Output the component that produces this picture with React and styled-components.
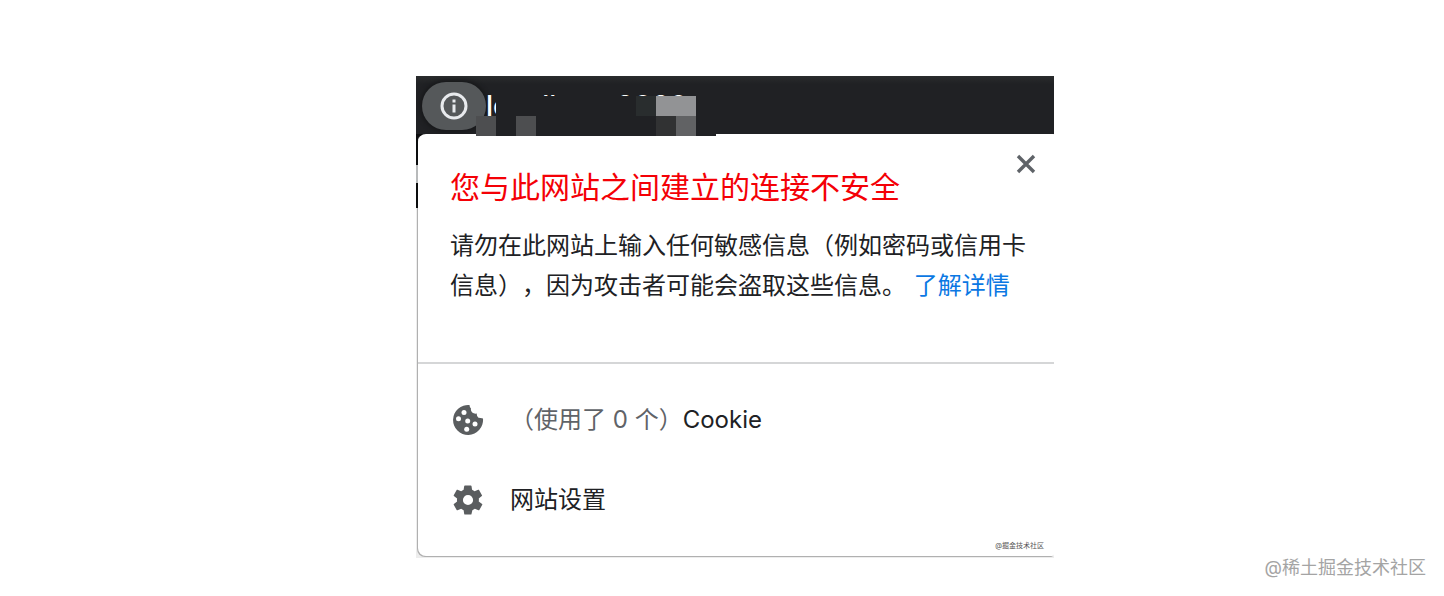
import React from "react";
import styled, { createGlobalStyle } from "styled-components";

const GlobalStyle = createGlobalStyle`
  * { box-sizing: border-box; }
  body {
    margin: 0;
    background: #fff;
    color: #202124;
    font-family: Inter, "Noto Sans CJK SC", sans-serif;
    text-spacing-trim: space-all;
  }
`;

const Page = styled.main`
  display: flex;
  flex-direction: column;
  align-items: center;
  min-height: 100vh;
  padding: 76px 0 16px 26px;
`;

const Capture = styled.section`
  width: 100%;
  max-width: 638px;
  overflow: hidden;
  background: #fff;
`;

const AddressBar = styled.header`
  position: relative;
  display: flex;
  align-items: center;
  height: 58px;
  padding: 2px 0 0 6px;
  background: linear-gradient(#2a2c2d, #202124 8px, #202124);
`;

const InfoButton = styled.button`
  display: flex;
  align-items: center;
  justify-content: center;
  width: 64px;
  height: 48px;
  padding: 0;
  border: 0;
  border-radius: 24px;
  background: #55585a;
  color: #e8eaed;
  box-shadow: 0 0 4px 2px #17181a;
`;

const Host = styled.span`
  color: #fff;
  font-size: 28px;
  font-weight: 500;
  line-height: 40px;
`;

const Mosaic = styled.svg`
  position: absolute;
  left: 60px;
  top: 20px;
  z-index: 2;
`;

const Frame = styled.div`
  position: relative;
  padding: 0 0 2px 2px;
  background: #ededed;
`;

const EdgeStrip = styled.span`
  position: absolute;
  left: 0;
  top: 0;
  z-index: 1;
  width: 2px;
  height: 74px;
  background: linear-gradient(#0c0d0e 31px, #b8babb 31px, #b8babb 49px, #0c0d0e 49px);
`;

const Corner = styled.span`
  position: absolute;
  left: 0;
  top: 0;
  width: 10px;
  height: 10px;
  background: #0c0d0e;
`;

const Popup = styled.article`
  position: relative;
  border-radius: 8px 2px 2px 8px;
  background: #fff;
  box-shadow: -1px 1px 0 #b0b0b0;
`;

const Message = styled.div`
  padding: 32px 28px 56px 32px;
  border-bottom: 2px solid #d5d6d7;
`;

const Title = styled.h1`
  margin: 0 0 18px;
  color: #f40006;
  font-size: 30px;
  font-weight: 400;
  line-height: 42px;
`;

const Description = styled.p`
  margin: 0;
  font-size: 24px;
  line-height: 40px;
`;

const Link = styled.a`
  margin-left: 1px;
  color: #0b78e3;
  text-decoration: none;
`;

const CloseButton = styled.button`
  position: absolute;
  top: 20px;
  right: 18px;
  display: flex;
  padding: 0;
  border: 0;
  background: none;
  color: #5f6368;
`;

const Options = styled.div`
  padding: 16px 0;
`;

const Option = styled.button`
  display: flex;
  align-items: center;
  gap: 26px;
  width: 100%;
  height: 80px;
  padding: 0 34px;
  border: 0;
  background: none;
  color: #202124;
  font: inherit;
  font-size: 24px;
  line-height: 40px;
  text-align: left;

  svg { flex: none; color: #5a5d5f; }
`;

const Count = styled.span`
  color: #5f6368;
`;

const SmallMark = styled.small`
  position: absolute;
  right: 10px;
  bottom: 6px;
  color: #555;
  font-size: 7px;
  line-height: 8px;
`;

const Watermark = styled.footer`
  align-self: flex-end;
  padding-right: 18px;
  color: #a4a4a4;
  font-size: 18px;
  line-height: 20px;
`;

const InfoIcon = () => (
  <svg width="28" height="28" viewBox="0 0 28 28" fill="currentColor">
    <circle cx="14" cy="14" r="12" fill="none" stroke="currentColor" strokeWidth="3" />
    <path d="M12.5 7.5h3v3h-3zM12.5 12.5h3v8h-3z" />
  </svg>
);

const CloseIcon = () => (
  <svg width="20" height="20" viewBox="0 0 20 20">
    <path d="M2 2 18 18M18 2 2 18" stroke="currentColor" strokeWidth="3.4" />
  </svg>
);

const CookieIcon = () => (
  <svg width="32" height="32" viewBox="0 0 32 32">
    <path fill="currentColor" d="M17.500 1A15 15 0 1 0 31 14.500Q28.500 14 26.500 13.800Q24.500 12.500 24.800 9.500Q22 10 20.200 8.500Q18.500 7 19 4.500Q17.500 3 17.500 1Z" />
    <g fill="#fff">
      <circle cx="12" cy="8.500" r="2.500" />
      <circle cx="6.500" cy="14.700" r="2.500" />
      <circle cx="15.700" cy="17" r="2.500" />
      <circle cx="23" cy="20" r="2.500" />
      <circle cx="14.700" cy="25.200" r="2.500" />
    </g>
  </svg>
);

const GearIcon = () => (
  <svg width="32" height="32" viewBox="1 1 22 22" fill="currentColor">
    <path fillRule="evenodd" d="M19.400 13c0-.3.100-.6.100-1s0-.7-.1-1l2.100-1.700c.2-.2.300-.4.100-.6l-2-3.500c-.1-.2-.4-.3-.6-.2l-2.500 1c-.5-.4-1.100-.7-1.700-1l-.4-2.600c0-.2-.2-.4-.5-.4h-4c-.2 0-.5.2-.5.400L9 5c-.6.300-1.100.6-1.700 1l-2.500-1c-.2-.1-.5 0-.6.200l-2 3.500c-.1.200-.1.500.100.600L4.500 11c0 .3-.1.600-.1 1s0 .7.100 1l-2.200 1.700c-.2.200-.2.400-.1.600l2 3.500c.1.200.4.300.6.200l2.500-1c.5.400 1.100.7 1.700 1l.4 2.600c0 .2.300.4.500.4h4c.3 0 .5-.2.500-.4L15 19c.6-.3 1.100-.6 1.700-1l2.500 1c.2.100.5 0 .6-.2l2-3.500c.1-.2.100-.5-.1-.6zM12 15.500A3.500 3.500 0 1 1 12 8.500a3.500 3.500 0 0 1 0 7z" />
  </svg>
);

const MosaicCover = () => (
  <Mosaic width="240" height="40" shapeRendering="crispEdges" aria-hidden="true">
    <path fill="#202124" d="M20 0H240V40H0V20H20Z" />
    <path fill="#4d4e50" d="M0 20H20V40H0ZM40 20H60V40H40Z" />
    <path fill="#292d2e" d="M160 0H180V20H160Z" />
    <path fill="#929395" d="M180 0H220V20H180Z" />
    <path fill="#313233" d="M180 20H200V40H180Z" />
    <path fill="#616264" d="M200 20H220V40H200Z" />
  </Mosaic>
);

export default function App() {
  return (
    <>
      <GlobalStyle />
      <Page>
        <Capture>
          <AddressBar>
            <InfoButton aria-label="网站信息"><InfoIcon /></InfoButton>
            <Host>localhost:8080</Host>
            <MosaicCover />
          </AddressBar>
          <Frame>
            <Corner />
            <Popup>
              <CloseButton aria-label="关闭"><CloseIcon /></CloseButton>
              <Message>
                <Title>您与此网站之间建立的连接不安全</Title>
                <Description>
                  请勿在此网站上输入任何敏感信息（例如密码或信用卡信息），因为攻击者可能会盗取这些信息。{" "}
                  <Link href="#details">了解详情</Link>
                </Description>
              </Message>
              <Options>
                <Option>
                  <CookieIcon />
                  <span><Count>（使用了 0 个）</Count>Cookie</span>
                </Option>
                <Option>
                  <GearIcon />
                  <span>网站设置</span>
                </Option>
              </Options>
              <SmallMark>@掘金技术社区</SmallMark>
            </Popup>
            <EdgeStrip />
          </Frame>
        </Capture>
        <Watermark>@稀土掘金技术社区</Watermark>
      </Page>
    </>
  );
}
